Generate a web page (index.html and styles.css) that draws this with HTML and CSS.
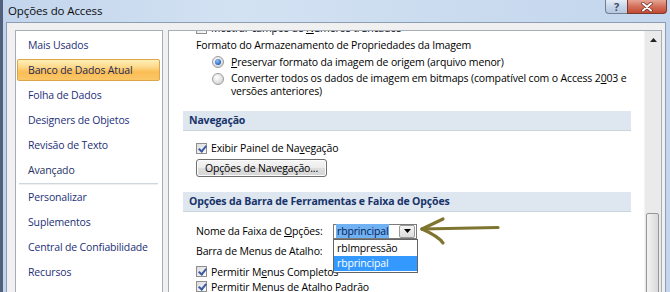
FILE: index.html
```html
<!DOCTYPE html>
<html lang="pt">
<head>
<meta charset="utf-8">
<title>Opções do Access</title>
<link rel="stylesheet" href="styles.css">
</head>
<body>
<div class="window">
  <div class="titlebar">
    <span class="title">Opções do Access</span>
    <div class="caption-buttons">
      <div class="cap-btn help">?</div>
      <div class="cap-btn close">
        <svg width="14" height="10" viewBox="0 0 14 10"><path d="M3 1.5 L11 8.5 M11 1.5 L3 8.5" stroke="#6b2a1e" stroke-width="3.4" stroke-linecap="round"/><path d="M3 1.5 L11 8.5 M11 1.5 L3 8.5" stroke="#fff" stroke-width="2" stroke-linecap="round"/></svg>
      </div>
    </div>
  </div>
  <div class="client">
    <nav class="sidebar">
      <div class="nav-item">Mais Usados</div>
      <div class="nav-item selected">Banco de Dados Atual</div>
      <div class="nav-item">Folha de Dados</div>
      <div class="nav-item">Designers de Objetos</div>
      <div class="nav-item">Revisão de Texto</div>
      <div class="nav-item last-group">Avançado</div>
      <div class="nav-sep"></div>
      <div class="nav-item">Personalizar</div>
      <div class="nav-item">Suplementos</div>
      <div class="nav-item">Central de Confiabilidade</div>
      <div class="nav-item">Recursos</div>
    </nav>
    <main class="content">
      <div class="scroll-area">
        <div class="scroll-content">
          <label class="check-row row-top"><span class="checkbox"></span><span>Mostrar campos de <u>N</u>úmeros truncados</span></label>
          <div class="group-title">Formato do Armazenamento de Propriedades da Imagem</div>
          <label class="radio-row r1"><span class="radio checked"></span><span><u>P</u>reservar formato da imagem de origem (arquivo menor)</span></label>
          <label class="radio-row r2"><span class="radio"></span><span class="radio-text">Converter todos os dados de imagem em bitmaps (compatível com o Access 2<u>0</u>03 e versões anteriores)</span></label>

          <div class="section-head sh1">Navegação</div>
          <label class="check-row exibir"><span class="checkbox checked"></span><span>Exibir Painel de Na<u>v</u>egação</span></label>
          <button class="btn">Opções de Navegação...</button>

          <div class="section-head sh2">Opções da Barra de Ferramentas e Faixa de Opções</div>
          <div class="field-row nome">
            <span class="field-label">Nome da Faixa de <u>O</u>pções:</span>
            <div class="combo">
              <span class="combo-text"><span class="sel">rbprincipal</span></span>
              <span class="combo-btn"><svg width="7" height="4" viewBox="0 0 7 4"><path d="M0 0 H7 L3.5 4 Z" fill="#000"/></svg></span>
              <div class="dropdown">
                <div class="dd-item">rbImpressão</div>
                <div class="dd-item active">rbprincipal</div>
              </div>
            </div>
          </div>
          <div class="field-row barra"><span class="field-label">Barra de Menus de Atalho:</span></div>
          <label class="check-row perm perm1"><span class="checkbox checked"></span><span>Permitir M<u>e</u>nus Completos</span></label>
          <label class="check-row perm"><span class="checkbox checked"></span><span>Permitir Menus de Atalho Padrão</span></label>
        </div>
      </div>
      <div class="scrollbar">
        <div class="sb-up"><svg width="7" height="4" viewBox="0 0 7 4"><path d="M0 4 H7 L3.5 0 Z" fill="#222"/></svg></div>
        <div class="sb-track"></div>
        <div class="sb-thumb"></div>
      </div>
    </main>
  </div>
  <svg class="arrow" width="90" height="40" viewBox="0 0 90 40">
    <g fill="none" stroke="#7f7530" stroke-width="3.2" stroke-linecap="round" stroke-linejoin="round">
      <path d="M5 17 C 20 16.5, 45 16, 81 15.5"/>
      <path d="M5 17 L 26 7"/>
      <path d="M5 17 C 14 21, 22 25, 26 31"/>
    </g>
  </svg>
</div>
</body>
</html>
```
FILE: styles.css
```css
* { box-sizing: border-box; }
html, body { margin: 0; padding: 0; }
body {
  width: 670px;
  height: 292px;
  overflow: hidden;
  font-family: "Open Sans", "Noto Sans", sans-serif;
  font-size: 10.5px;
  letter-spacing: -0.15px;
  color: #000;
  background: #c9daee;
}
u { text-decoration: underline; text-underline-offset: 1px; }

.window {
  position: relative;
  width: 670px;
  height: 292px;
  display: flex;
  flex-direction: column;
  border-left: 3px solid #4f5f7c;
  background: linear-gradient(to right, #c2d5ec 0%, #d3e2f3 35%, #cadbef 70%, #c3d6ed 100%);
}

.titlebar {
  height: 22px;
  flex: none;
  display: flex;
  align-items: flex-start;
  justify-content: space-between;
  padding-left: 5px;
}
.title {
  font-size: 11.5px;
  letter-spacing: -0.1px;
  line-height: 22px;
  color: #0c0c0c;
}
.caption-buttons {
  display: flex;
  margin-right: 3px;
}
.cap-btn {
  height: 14px;
  display: flex;
  align-items: center;
  justify-content: center;
  border: 1px solid #6f7f96;
  border-top: none;
}
.cap-btn.help {
  width: 22px;
  border-radius: 0 0 0 4px;
  border-right: none;
  background: linear-gradient(#e6eef8, #c6d6ea 50%, #b7c9e0);
  color: #3d4c63;
  font-size: 11px;
  font-weight: bold;
  line-height: 12px;
}
.cap-btn.close {
  width: 40px;
  border-radius: 0 0 4px 0;
  border-color: #7a3a2e;
  background: linear-gradient(#e7a594, #d3705c 50%, #c24a32);
}

.client {
  flex: 1;
  display: flex;
  gap: 5px;
  margin: 0 4px 0 3px;
  padding: 7px 3px 0 8px;
  background: #f0f0f0;
  border: 1px solid #8c9db4;
  border-bottom: none;
  min-height: 0;
}

/* Sidebar */
.sidebar {
  width: 148px;
  flex: none;
  background: #fff;
  border: 1px solid #a5adb8;
  border-bottom: none;
  padding: 3px 2px 0 1px;
  display: flex;
  flex-direction: column;
}
.nav-item {
  height: 22px;
  flex: none;
  margin-bottom: 3px;
  padding-left: 10px;
  border: 1px solid transparent;
  border-radius: 2px;
  display: flex;
  align-items: center;
  color: #1d2f78;
  white-space: nowrap;
}
.nav-item.selected {
  color: #1c2a55;
  border-color: #dca54a;
  background: linear-gradient(#fff0b8 0%, #fdd98a 35%, #fbbd55 60%, #fbc768 100%);
}
.nav-item.last-group { margin-bottom: 2px; color: #263265; }
.nav-sep {
  height: 2px;
  flex: none;
  margin: 0 2px 1px 2px;
  border-top: 1px solid #cfd5dc;
  border-bottom: 1px solid #eef1f4;
}

/* Content panel */
.content {
  width: 494px;
  flex: none;
  display: flex;
  background: #fff;
  border: 1px solid #a5adb8;
  border-bottom: none;
  min-height: 0;
}
.scroll-area {
  flex: 1;
  overflow: hidden;
  position: relative;
}
.scroll-content {
  margin-top: -10px;
  display: flex;
  flex-direction: column;
  color: #000;
}

.check-row, .radio-row {
  display: flex;
  align-items: center;
  padding-left: 27px;
  white-space: nowrap;
}
.checkbox {
  width: 11px;
  height: 11px;
  flex: none;
  margin-right: 4px;
  border: 1px solid #8e8f8f;
  background: linear-gradient(135deg, #dcdcdc, #fbfbfb);
  position: relative;
}
.checkbox.checked::after {
  content: "";
  position: absolute;
  left: 3px;
  top: 0px;
  width: 3px;
  height: 6px;
  border: solid #3b5aa3;
  border-width: 0 2px 2px 0;
  transform: rotate(40deg);
}
.row-top { height: 14px; }

.group-title {
  height: 15px;
  margin-top: 3px;
  padding-left: 27px;
  line-height: 15px;
}
.radio-row { padding-left: 43px; align-items: flex-start; }
.radio {
  width: 12px;
  height: 12px;
  flex: none;
  margin-right: 7px;
  border-radius: 50%;
  border: 1px solid #9a9a9a;
  background: radial-gradient(circle at 40% 35%, #ffffff, #d4d4d4 80%);
  position: relative;
}
.radio.checked::after {
  content: "";
  position: absolute;
  left: 2px;
  top: 2px;
  width: 6px;
  height: 6px;
  border-radius: 50%;
  background: radial-gradient(circle at 40% 35%, #8fc2ff, #1e5fb8 75%);
}
.r1 { height: 17px; align-items: center; }
.r2 { margin-top: 2px; line-height: 13px; }
.r2 .radio { margin-top: 1px; }
.radio-text { white-space: normal; width: 400px; }

.section-head {
  height: 20px;
  margin: 13px 13px 0 14px;
  padding-left: 6px;
  background: #dee6ef;
  border-bottom: 1px solid #cbd5e0;
  font-weight: bold;
  color: #17346a;
  line-height: 19px;
}
.exibir { height: 16px; margin-top: 9px; }
.btn {
  align-self: flex-start;
  margin: 3px 0 0 27px;
  width: 131px;
  height: 18px;
  padding: 0;
  font: inherit;
  letter-spacing: inherit;
  color: #000;
  border: 1px solid #707070;
  border-radius: 3px;
  background: linear-gradient(#f6f6f6 0%, #ececec 48%, #dddddd 52%, #d6d6d6 100%);
  box-shadow: inset 0 0 0 1px #fcfcfc;
}
.sh2 { margin-top: 15px; }

.field-row {
  display: flex;
  align-items: center;
  padding-left: 27px;
  white-space: nowrap;
}
.field-label { width: 137px; }
.nome { height: 18px; margin-top: 10px; }
.barra { height: 16px; margin-top: 3px; }
.perm { height: 15px; }
.perm1 { margin-top: 5px; }

.combo {
  position: relative;
  width: 84px;
  height: 15px;
  border: 1px solid #7a7a7a;
  background: #fff;
  display: flex;
  align-items: center;
}
.combo-text { flex: 1; padding-left: 2px; }
.sel {
  background: #6fb1f2;
  color: #0b1e55;
  padding: 0 1px;
}
.combo-btn {
  width: 16px;
  height: 13px;
  margin-right: 1px;
  display: flex;
  align-items: center;
  justify-content: center;
  border: 1px solid #9a9a9a;
  border-radius: 2px;
  background: linear-gradient(#f4f4f4, #dcdcdc);
}
.dropdown {
  position: absolute;
  left: -1px;
  top: 14px;
  width: 85px;
  background: #fff;
  border: 1px solid #646464;
  padding: 1px 0;
  z-index: 2;
}
.dd-item {
  height: 15px;
  line-height: 15px;
  padding-left: 3px;
  color: #000;
}
.dd-item.active {
  background: #3399ff;
  color: #fff;
}

/* Scrollbar */
.scrollbar {
  width: 17px;
  flex: none;
  position: relative;
  background: #eaeaea;
  border-left: 1px solid #f4f4f4;
  display: flex;
  flex-direction: column;
}
.sb-up {
  height: 17px;
  flex: none;
  display: flex;
  align-items: center;
  justify-content: center;
}
.sb-track { flex: 1; }
.sb-thumb {
  position: absolute;
  left: 1px;
  right: 2px;
  top: 182px;
  bottom: -4px;
  border: 1px solid #979797;
  border-radius: 2px;
  background: linear-gradient(to right, #f3f3f3, #e6e6e6 50%, #d9d9d9);
}

/* Annotation arrow overlay */
.arrow {
  position: absolute;
  left: 414px;
  top: 212px;
}
```
